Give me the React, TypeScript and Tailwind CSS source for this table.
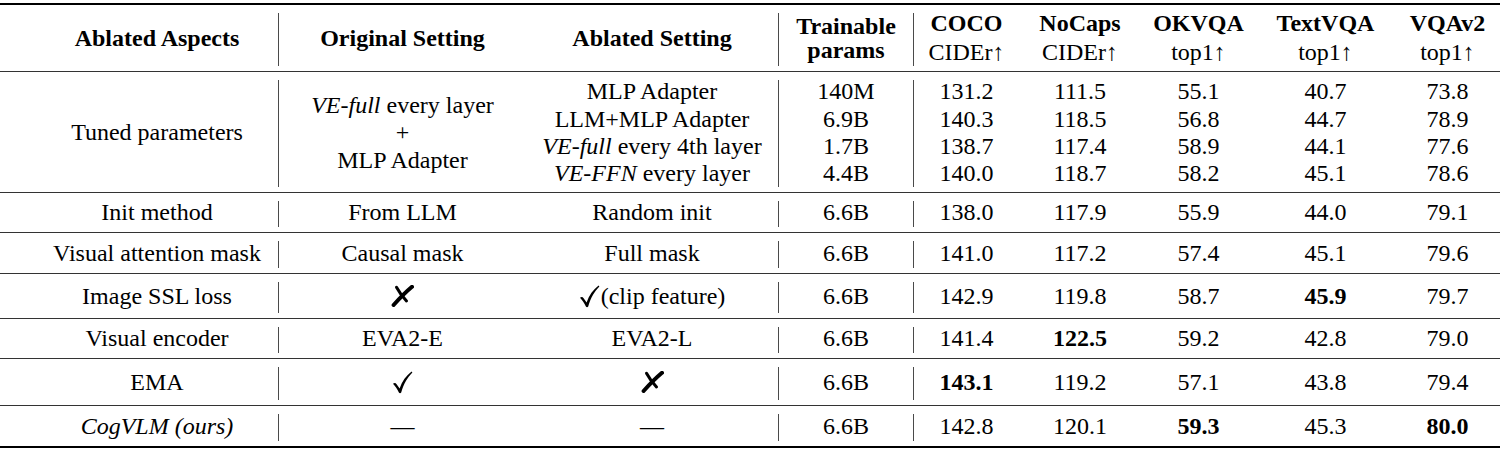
import { Fragment, type ReactNode } from 'react';

// column widths line up with the rules in the paper figure
const widths = [
    'w-[278px] pl-[36px]',
    'w-[247px]',
    'w-[252px]',
    'w-[134px]',
    'w-[105px]',
    'w-[122px]',
    'w-[115px]',
    'w-[139px]',
    'w-[105px]',
];

// vertical rules sit after these columns only
const ruleAfter = [0, 2, 3];

function Row({ height, cells }: { height: string; cells: ReactNode[] }) {
    return (
        <div className={`flex ${height}`}>
            {cells.map((cell, i) => (
                <Fragment key={i}>
                    <div
                        className={`${widths[i]} shrink-0 flex flex-col items-center justify-center text-center leading-[27px]`}
                    >
                        {cell}
                    </div>
                    {ruleAfter.includes(i) && <div className="w-px shrink-0 bg-[#4a4a4a] mt-[8px] mb-[5px]" />}
                </Fragment>
            ))}
        </div>
    );
}

// pifont-style ballot x and check mark
const Cross = () => (
    <svg width="23" height="22" viewBox="0 0 23 22" className="block" fill="none" stroke="black" strokeLinecap="round">
        <path d="M21 1.8 Q13 8.5 2.6 20" strokeWidth="4" />
        <path d="M5.5 2.2 Q9.5 9.5 15.5 16" strokeWidth="3" />
    </svg>
);

const Check = () => (
    <svg width="21" height="23" viewBox="0 0 21 23" className="block shrink-0" fill="black">
        <path d="M1 12.8 C2.4 11.6 3.6 11.8 4.8 13.4 L7.6 17.4 C10.2 10.4 14 4.8 19.6 0.6 L20.4 1.5 C15.4 6.4 11.8 12.6 9.2 21.6 C8.6 22.4 7.4 22.4 6.9 21.6 C5.2 18.2 3.4 15.2 1 12.8 Z" />
    </svg>
);

function Metric({ name, unit }: { name: string; unit: string }) {
    return (
        <div className="leading-[29px]">
            <div className="font-bold">{name}</div>
            <div>{unit}</div>
        </div>
    );
}

function Stack({ lines }: { lines: ReactNode[] }) {
    return (
        <div className="leading-[27.3px] pt-[2px]">
            {lines.map((l, i) => (
                <div key={i}>{l}</div>
            ))}
        </div>
    );
}

const MidRule = () => <div className="h-px bg-[#333]" />;

export default function App() {
    return (
        <div className="w-[1504px] bg-white text-black font-['Liberation_Serif','Times_New_Roman',serif] text-[24px]">
            <div className="w-[1500px] pt-[3px]">
                <div className="h-[2px] bg-black" />
                <Row
                    height="h-[66px]"
                    cells={[
                        <b>Ablated Aspects</b>,
                        <b>Original Setting</b>,
                        <b>Ablated Setting</b>,
                        <div className="font-bold leading-[24px]">
                            <div>Trainable</div>
                            <div>params</div>
                        </div>,
                        <Metric name="COCO" unit="CIDEr↑" />,
                        <Metric name="NoCaps" unit="CIDEr↑" />,
                        <Metric name="OKVQA" unit="top1↑" />,
                        <Metric name="TextVQA" unit="top1↑" />,
                        <Metric name="VQAv2" unit="top1↑" />,
                    ]}
                />
                <MidRule />
                <Row
                    height="h-[120px]"
                    cells={[
                        'Tuned parameters',
                        <Stack
                            lines={[
                                <>
                                    <i>VE-full</i> every layer
                                </>,
                                '+',
                                'MLP Adapter',
                            ]}
                        />,
                        <Stack
                            lines={[
                                'MLP Adapter',
                                'LLM+MLP Adapter',
                                <>
                                    <i>VE-full</i> every 4th layer
                                </>,
                                <>
                                    <i>VE-FFN</i> every layer
                                </>,
                            ]}
                        />,
                        <Stack lines={['140M', '6.9B', '1.7B', '4.4B']} />,
                        <Stack lines={['131.2', '140.3', '138.7', '140.0']} />,
                        <Stack lines={['111.5', '118.5', '117.4', '118.7']} />,
                        <Stack lines={['55.1', '56.8', '58.9', '58.2']} />,
                        <Stack lines={['40.7', '44.7', '44.1', '45.1']} />,
                        <Stack lines={['73.8', '78.9', '77.6', '78.6']} />,
                    ]}
                />
                <MidRule />
                <Row
                    height="h-[39px]"
                    cells={['Init method', 'From LLM', 'Random init', '6.6B', '138.0', '117.9', '55.9', '44.0', '79.1']}
                />
                <MidRule />
                <Row
                    height="h-[40px]"
                    cells={['Visual attention mask', 'Causal mask', 'Full mask', '6.6B', '141.0', '117.2', '57.4', '45.1', '79.6']}
                />
                <MidRule />
                <Row
                    height="h-[44px]"
                    cells={[
                        'Image SSL loss',
                        <Cross />,
                        <span className="flex items-center gap-[1px]">
                            <Check />
                            (clip feature)
                        </span>,
                        '6.6B',
                        '142.9',
                        '119.8',
                        '58.7',
                        <b>45.9</b>,
                        '79.7',
                    ]}
                />
                <MidRule />
                <Row
                    height="h-[39px]"
                    cells={['Visual encoder', 'EVA2-E', 'EVA2-L', '6.6B', '141.4', <b>122.5</b>, '59.2', '42.8', '79.0']}
                />
                <MidRule />
                <Row
                    height="h-[46px]"
                    cells={['EMA', <Check />, <Cross />, '6.6B', <b>143.1</b>, '119.2', '57.1', '43.8', '79.4']}
                />
                <MidRule />
                <Row
                    height="h-[40px]"
                    cells={[
                        <i>CogVLM (ours)</i>,
                        '—',
                        '—',
                        '6.6B',
                        '142.8',
                        '120.1',
                        <b>59.3</b>,
                        '45.3',
                        <b>80.0</b>,
                    ]}
                />
                <div className="h-[2px] bg-black" />
            </div>
        </div>
    );
}
